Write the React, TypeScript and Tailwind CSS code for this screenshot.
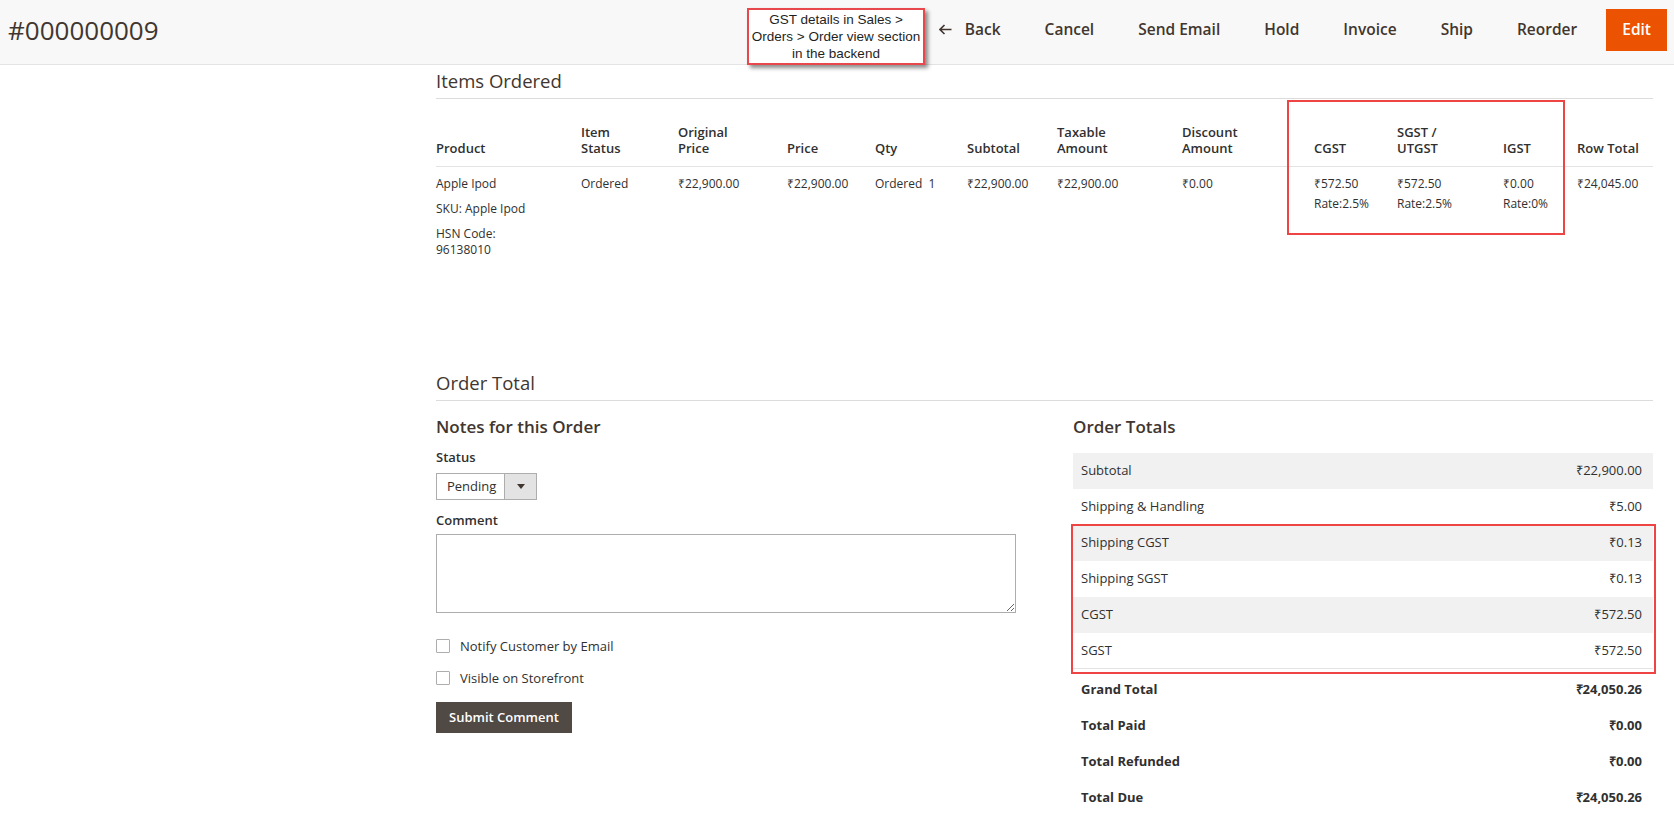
import React from 'react';

const actions = ['Cancel', 'Send Email', 'Hold', 'Invoice', 'Ship', 'Reorder'];

const cols = [145, 97, 109, 88, 92, 90, 125, 132, 83, 106, 74, 76];

const heads: string[][] = [
  ['Product'],
  ['Item', 'Status'],
  ['Original', 'Price'],
  ['Price'],
  ['Qty'],
  ['Subtotal'],
  ['Taxable', 'Amount'],
  ['Discount', 'Amount'],
  ['CGST'],
  ['SGST /', 'UTGST'],
  ['IGST'],
  ['Row Total'],
];

const totals = [
  { label: 'Subtotal', value: '₹22,900.00' },
  { label: 'Shipping & Handling', value: '₹5.00' },
  { label: 'Shipping CGST', value: '₹0.13' },
  { label: 'Shipping SGST', value: '₹0.13' },
  { label: 'CGST', value: '₹572.50' },
  { label: 'SGST', value: '₹572.50' },
];

const grand = [
  { label: 'Grand Total', value: '₹24,050.26' },
  { label: 'Total Paid', value: '₹0.00' },
  { label: 'Total Refunded', value: '₹0.00' },
  { label: 'Total Due', value: '₹24,050.26' },
];

function Checkbox({ label }: { label: string }) {
  return (
    <label className="flex h-[14px] items-center gap-[10px]">
      <span className="h-[14px] w-[14px] rounded-[1px] border border-[#adadad] bg-white" />
      <span className="text-[13px] leading-[16px] text-[#303030]">{label}</span>
    </label>
  );
}

export default function App() {
  return (
    <div className="min-h-[816px] w-full bg-white font-['Open_Sans',sans-serif] text-[#303030]">
      {/* page header */}
      <div className="relative flex h-[65px] items-center justify-between border-b border-[#e3e3e3] bg-[#f8f8f8] pb-[5px] pl-2 pr-[7px]">
        <h1 className="text-[26px] font-normal leading-none text-[#41362f]">#000000009</h1>

        <div className="absolute left-[747px] top-[8px] flex h-[57px] w-[178px] flex-col items-center justify-center whitespace-nowrap border-2 border-[#e8474b] bg-white font-['Liberation_Sans',sans-serif] text-[13.5px] leading-[17px] text-[#1f1f1f] shadow-[3px_3px_4px_rgba(0,0,0,0.45)]">
          <span>GST details in Sales &gt;</span>
          <span>Orders &gt; Order view section</span>
          <span>in the backend</span>
        </div>

        <div className="flex items-center text-[15.5px] font-semibold text-[#41362f]">
          <button className="flex items-center gap-[13px] px-[22px]">
            <svg width="13" height="11" viewBox="0 0 13 11" fill="none" stroke="#41362f" strokeWidth="1.6">
              <path d="M12.5 5.5H1.5M5.5 1L1 5.5L5.5 10" />
            </svg>
            <span>Back</span>
          </button>
          {actions.map((a) => (
            <button key={a} className="px-[22px]">
              {a}
            </button>
          ))}
          <button className="ml-[7px] h-[42px] bg-[#eb5202] px-4 text-white">Edit</button>
        </div>
      </div>

      <div className="pl-[436px] pr-[21px]">
        {/* Items Ordered */}
        <h2 className="mt-[4px] border-b border-[#dcdcdc] pb-[5px] text-[18.5px] font-normal leading-[24px] text-[#41362f]">
          Items Ordered
        </h2>
        <div className="relative">
          <table className="w-full table-fixed border-collapse">
            <colgroup>
              {cols.map((w, i) => (
                <col key={i} style={{ width: w }} />
              ))}
            </colgroup>
            <thead>
              <tr className="border-b border-[#e3e3e3]">
                {heads.map((h, i) => (
                  <th
                    key={i}
                    className="pb-[10px] pt-[25px] text-left align-bottom text-[13px] font-semibold leading-[16px] text-[#303030]"
                  >
                    {h.map((l) => (
                      <div key={l}>{l}</div>
                    ))}
                  </th>
                ))}
              </tr>
            </thead>
            <tbody className="text-[12px] leading-[16px]">
              <tr>
                <td className="pt-[9px] align-top">
                  <div>Apple Ipod</div>
                  <div className="mt-[9px]">SKU: Apple Ipod</div>
                  <div className="mt-[9px]">HSN Code:</div>
                  <div>96138010</div>
                </td>
                <td className="pt-[9px] align-top">Ordered</td>
                <td className="pt-[9px] align-top">₹22,900.00</td>
                <td className="pt-[9px] align-top">₹22,900.00</td>
                <td className="pt-[9px] align-top">Ordered&nbsp;&nbsp;1</td>
                <td className="pt-[9px] align-top">₹22,900.00</td>
                <td className="pt-[9px] align-top">₹22,900.00</td>
                <td className="pt-[9px] align-top">₹0.00</td>
                <td className="pt-[9px] align-top">
                  <div>₹572.50</div>
                  <div className="mt-1">Rate:2.5%</div>
                </td>
                <td className="pt-[9px] align-top">
                  <div>₹572.50</div>
                  <div className="mt-1">Rate:2.5%</div>
                </td>
                <td className="pt-[9px] align-top">
                  <div>₹0.00</div>
                  <div className="mt-1">Rate:0%</div>
                </td>
                <td className="pt-[9px] align-top">₹24,045.00</td>
              </tr>
            </tbody>
          </table>
          <div className="pointer-events-none absolute left-[851px] top-[1px] h-[135px] w-[278px] border-2 border-[#ee4444]" />
        </div>

        {/* Order Total */}
        <h2 className="mt-[113px] border-b border-[#dcdcdc] pb-[5px] text-[18.5px] font-normal leading-[24px] text-[#41362f]">
          Order Total
        </h2>

        <div className="grid grid-cols-[637px_580px]">
          <div>
            <h3 className="mt-[15px] text-[17px] font-semibold leading-[22px] text-[#41362f]">Notes for this Order</h3>
            <div className="mt-[10px] text-[13px] font-semibold leading-[18px]">Status</div>
            <div className="mt-[7px] flex h-[27px] w-[101px] border border-[#adadad] bg-white">
              <span className="flex flex-1 items-center pl-[10px] text-[13px]">Pending</span>
              <span className="flex w-[32px] items-center justify-center border-l border-[#adadad] bg-[#e3e3e3]">
                <span className="h-0 w-0 border-x-[4px] border-t-[5px] border-x-transparent border-t-[#41362f]" />
              </span>
            </div>
            <div className="mt-[11px] text-[13px] font-semibold leading-[18px]">Comment</div>
            <textarea className="mt-[5px] block h-[79px] w-[580px] border border-[#adadad] bg-white outline-none" />
            <div className="mt-[26px]">
              <Checkbox label="Notify Customer by Email" />
            </div>
            <div className="mt-[18px]">
              <Checkbox label="Visible on Storefront" />
            </div>
            <button className="mt-[17px] h-[31px] bg-[#514943] px-[13px] text-[13px] font-semibold text-white">
              Submit Comment
            </button>
          </div>

          <div>
            <h3 className="mt-[15px] text-[17px] font-semibold leading-[22px] text-[#41362f]">Order Totals</h3>
            <div className="relative mt-[15px] text-[13px]">
              {totals.map((t, i) => (
                <div
                  key={t.label}
                  className={`flex h-[36px] items-center justify-between pl-2 pr-[11px] ${
                    i % 2 === 0 ? 'bg-[#f1f1f1]' : 'bg-white'
                  } ${i === totals.length - 1 ? 'border-b border-[#e3e3e3]' : ''}`}
                >
                  <span>{t.label}</span>
                  <span>{t.value}</span>
                </div>
              ))}
              <div className="pt-[3px]">
                {grand.map((t) => (
                  <div key={t.label} className="flex h-[36px] items-center justify-between pl-2 pr-[11px] font-bold">
                    <span>{t.label}</span>
                    <span>{t.value}</span>
                  </div>
                ))}
              </div>
              <div className="pointer-events-none absolute left-[-2px] top-[71px] h-[150px] w-[585px] border-2 border-[#ee4444]" />
            </div>
          </div>
        </div>
      </div>
    </div>
  );
}
